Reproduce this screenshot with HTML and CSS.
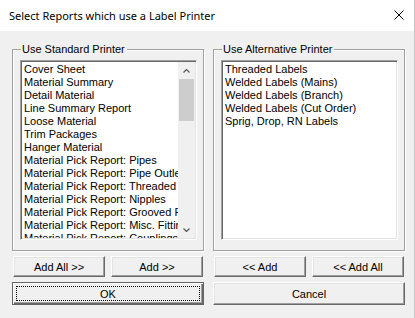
FILE: index.html
```html
<!DOCTYPE html>
<html lang="en">
<head>
  <meta charset="UTF-8" />
  <title>Select Reports which use a Label Printer</title>
  <link rel="stylesheet" href="styles.css">
</head>
<body>
  <div class="window">
    <div class="titlebar">
      <span class="title">Select Reports which use a Label Printer</span>
      <svg class="close" width="10" height="10" viewBox="0 0 10 10">
        <path d="M0.5 0.5 L9.5 9.5 M9.5 0.5 L0.5 9.5" stroke="#000" stroke-width="1" fill="none" />
      </svg>
    </div>

    <div class="content">
      <fieldset class="group">
        <legend>Use Standard Printer</legend>
        <div class="listbox">
          <ul class="items">
            <li>Cover Sheet</li>
            <li>Material Summary</li>
            <li>Detail Material</li>
            <li>Line Summary Report</li>
            <li>Loose Material</li>
            <li>Trim Packages</li>
            <li>Hanger Material</li>
            <li>Material Pick Report: Pipes</li>
            <li>Material Pick Report: Pipe Outlets</li>
            <li>Material Pick Report: Threaded Fittings</li>
            <li>Material Pick Report: Nipples</li>
            <li>Material Pick Report: Grooved Fittings</li>
            <li>Material Pick Report: Misc. Fittings</li>
            <li>Material Pick Report: Couplings</li>
          </ul>
          <div class="scrollbar">
            <div class="arrow">
              <svg width="7" height="4" viewBox="0 0 7 4"><path d="M0.5 3.5 L3.5 0.5 L6.5 3.5" stroke="#606060" stroke-width="1.3" fill="none" /></svg>
            </div>
            <div class="track"><div class="thumb"></div></div>
            <div class="arrow">
              <svg width="7" height="4" viewBox="0 0 7 4"><path d="M0.5 0.5 L3.5 3.5 L6.5 0.5" stroke="#606060" stroke-width="1.3" fill="none" /></svg>
            </div>
          </div>
        </div>
      </fieldset>

      <fieldset class="group">
        <legend>Use Alternative Printer</legend>
        <div class="listbox">
          <ul class="items">
            <li>Threaded Labels</li>
            <li>Welded Labels (Mains)</li>
            <li>Welded Labels (Branch)</li>
            <li>Welded Labels (Cut Order)</li>
            <li>Sprig, Drop, RN Labels</li>
          </ul>
        </div>
      </fieldset>

      <div class="btnrow">
        <button class="btn">Add All &gt;&gt;</button>
        <button class="btn">Add &gt;&gt;</button>
      </div>
      <div class="btnrow">
        <button class="btn">&lt;&lt; Add</button>
        <button class="btn">&lt;&lt; Add All</button>
      </div>

      <button class="btn big default"><span class="focus">OK</span></button>
      <button class="btn big">Cancel</button>
    </div>
  </div>
</body>
</html>
```

FILE: styles.css
```css
body {
  margin: 0;
  background-color: #f0f0f0;
  font-family: 'Liberation Sans', Arial, sans-serif;
  font-size: 11px;
  color: #000;
}

.window {
  width: 415px;
  height: 318px;
  box-sizing: border-box;
  border-right: 1px solid #c4c4c4;
  background-color: #f0f0f0;
}

.titlebar {
  height: 31px;
  background-color: #fff;
  display: flex;
  align-items: center;
  justify-content: space-between;
  padding: 0 10px 0 9px;
}

.title {
  font-family: 'Noto Sans', sans-serif;
  font-size: 11px;
  color: #000;
  margin-top: -1px;
}

.close {
  margin-top: -1px;
}

.content {
  display: grid;
  grid-template-columns: 192px 192px;
  column-gap: 9px;
  padding: 12px 0 0 12px;
}

.group {
  margin: 0;
  padding: 4px 6px 10px 7px;
  border: 1px solid #a0a0a0;
  box-shadow: 1px 1px 0 #fff, inset 1px 1px 0 #fff;
  min-width: 0;
}

.group legend {
  margin-left: 1px;
  padding: 0 2px 0 1px;
  line-height: 13px;
  background-color: #f0f0f0;
}

.listbox {
  height: 180px;
  box-sizing: border-box;
  display: flex;
  background-color: #fff;
  border: 1px solid;
  border-color: #a0a0a0 #fff #fff #a0a0a0;
  box-shadow: inset 1px 1px 0 #696969, inset -1px -1px 0 #e3e3e3;
  padding: 2px 2px 1px 2px;
  overflow: hidden;
}

.items {
  flex: 1;
  list-style: none;
  margin: 0;
  padding: 0 0 0 1px;
  overflow: hidden;
  white-space: nowrap;
}

.items li {
  height: 13px;
  line-height: 13px;
}

.scrollbar {
  width: 17px;
  display: flex;
  flex-direction: column;
  background-color: #f0f0f0;
  margin: -1px -1px 0 0;
}

.arrow {
  height: 17px;
  display: flex;
  align-items: center;
  justify-content: center;
}

.track {
  flex: 1;
}

.thumb {
  height: 42px;
  margin: 0 1px;
  background-color: #cdcdcd;
}

.btnrow {
  display: flex;
  gap: 6px;
  padding: 0 1px;
  margin-top: 5px;
}

.btn {
  font-family: 'Liberation Sans', Arial, sans-serif;
  font-size: 11px;
  color: #000;
  background-color: #f0f0f0;
  height: 21px;
  flex: 1;
  padding: 0;
  border: 1px solid;
  border-color: #fff #696969 #696969 #fff;
  box-shadow: inset -1px -1px 0 #a0a0a0, inset 1px 1px 0 #e3e3e3;
}

.big {
  height: 23px;
  margin-top: 5px;
}

.default {
  display: flex;
  border-color: #646464;
  box-shadow: inset 1px 1px 0 #fff, inset -1px -1px 0 #696969, inset -2px -2px 0 #a0a0a0;
}

.focus {
  flex: 1;
  margin: 3px;
  border: 1px dotted #000;
  display: flex;
  align-items: center;
  justify-content: center;
}
```
